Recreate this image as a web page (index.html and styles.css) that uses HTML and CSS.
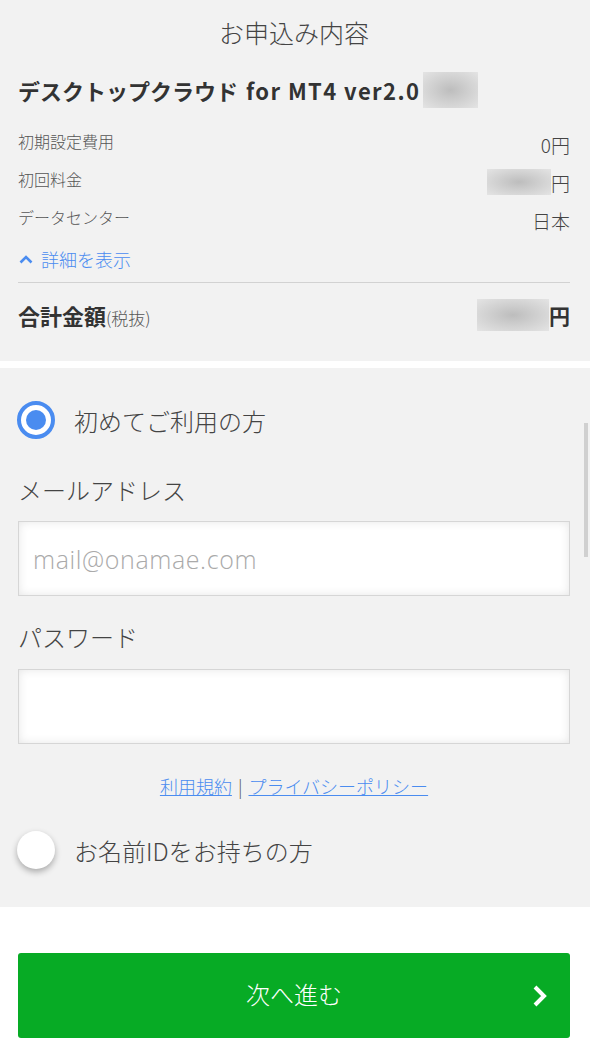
FILE: index.html
```html
<!DOCTYPE html>
<html lang="ja">
<head>
    <meta charset="UTF-8">
    <meta name="viewport" content="width=device-width, initial-scale=1.0">
    <title>お申込み内容</title>
    <link rel="stylesheet" href="styles.css">
</head>
<body>

<div class="summary">
    <h2 class="summary-title">お申込み内容</h2>
    <div class="product">デスクトップクラウド<span class="product-latin">for MT4 ver2.0</span><span class="blur blur-plan"></span></div>

    <div class="row row-first">
        <span class="row-label">初期設定費用</span>
        <span class="row-value">0円</span>
    </div>
    <div class="row">
        <span class="row-label">初回料金</span>
        <span class="row-value"><span class="blur blur-price"></span>円</span>
    </div>
    <div class="row">
        <span class="row-label">データセンター</span>
        <span class="row-value">日本</span>
    </div>

    <a class="toggle" href="#">
        <svg width="14" height="10" viewBox="0 0 14 10"><path d="M1.5 8.5 L7 3 L12.5 8.5" fill="none" stroke="#4a8cf0" stroke-width="2.6"/></svg>
        詳細を表示
    </a>

    <div class="total">
        <span class="total-label">合計金額<small>(税抜)</small></span>
        <span class="total-value"><span class="blur blur-total"></span>円</span>
    </div>
</div>

<div class="login">
    <label class="choice">
        <span class="radio radio-on"></span>
        初めてご利用の方
    </label>

    <div class="field-label">メールアドレス</div>
    <input class="field" type="text" placeholder="mail@onamae.com">

    <div class="field-label field-label-pw">パスワード</div>
    <input class="field field-pw" type="password">

    <div class="links">
        <a href="#">利用規約</a><span class="sep">|</span><a href="#">プライバシーポリシー</a>
    </div>

    <label class="choice choice-id">
        <span class="radio"></span>
        お名前IDをお持ちの方
    </label>

    <div class="scrollbar"></div>
</div>

<div class="actions">
    <button class="next">
        次へ進む
        <svg class="next-arrow" width="16" height="24" viewBox="0 0 16 24"><path d="M3 3 L12 12 L3 21" fill="none" stroke="#fff" stroke-width="4"/></svg>
    </button>
</div>

</body>
</html>
```

FILE: styles.css
```css
* {
    margin: 0;
    padding: 0;
    box-sizing: border-box;
}

body {
    font-family: "Noto Sans CJK JP", "Open Sans", sans-serif;
    font-weight: 300;
    background-color: #ffffff;
    color: #333;
    width: 590px;
}

/* お申込み内容 */
.summary {
    background-color: #f2f2f2;
    padding: 18px 20px 27px 18px;
    height: 361px;
    margin-bottom: 7px;
}

.summary-title {
    font-size: 25px;
    font-weight: 300;
    line-height: 32px;
    text-align: center;
    color: #444;
    margin-top: -2px;
    margin-bottom: 2px;
}

.product {
    margin-top: 24px;
    height: 36px;
    font-size: 22px;
    font-weight: bold;
    line-height: 36px;
    color: #333;
    display: flex;
    align-items: center;
}

.product-latin {
    margin-left: 8px;
    letter-spacing: 1.4px;
}

.blur {
    display: inline-block;
    background: radial-gradient(ellipse at center, #bdbdbd 0%, #cfcfcf 45%, #e4e4e4 100%);
}

.blur-plan {
    width: 55px;
    height: 36px;
    margin-left: 3px;
}

.row {
    display: flex;
    justify-content: space-between;
    align-items: center;
    height: 38px;
}

.row-first {
    margin-top: 16px;
}

.row-label {
    font-size: 16px;
    color: #555;
    margin-top: -4px;
}

.row-value {
    font-size: 19px;
    color: #444;
    display: flex;
    align-items: center;
    margin-top: 2px;
}

.blur-price {
    width: 64px;
    height: 26px;
}

.toggle {
    display: flex;
    align-items: center;
    gap: 8px;
    margin-top: 9px;
    height: 24px;
    font-size: 18px;
    color: #4a8cf0;
    text-decoration: none;
    padding-left: 1px;
}

.total {
    display: flex;
    justify-content: space-between;
    align-items: center;
    margin-top: 11px;
    border-top: 1px solid #d2d2d2;
    padding-top: 12px;
    height: 52px;
}

.total-label {
    font-size: 22px;
    font-weight: bold;
    color: #333;
}

.total-label small {
    font-size: 17px;
    font-weight: 300;
    color: #555;
}

.total-value {
    display: flex;
    align-items: center;
    font-size: 21px;
    font-weight: bold;
}

.blur-total {
    width: 72px;
    height: 32px;
}

/* ログイン */
.login {
    position: relative;
    background-color: #f2f2f2;
    padding: 31px 20px 36px 18px;
}

.choice {
    display: flex;
    align-items: center;
    gap: 19px;
    height: 42px;
    font-size: 24px;
    color: #444;
    cursor: pointer;
}

.radio {
    width: 38px;
    height: 38px;
    margin-left: -1px;
    border-radius: 50%;
    background-color: #fff;
    box-shadow: 0 3px 6px rgba(0, 0, 0, 0.3);
    flex-shrink: 0;
}

.radio-on {
    box-shadow: none;
    border: 4px solid #4a8cf0;
    display: flex;
    align-items: center;
    justify-content: center;
}

.radio-on::after {
    content: "";
    width: 20px;
    height: 20px;
    border-radius: 50%;
    background-color: #4a8cf0;
}

.field-label {
    margin-top: 33px;
    font-size: 24px;
    line-height: 32px;
    color: #444;
}

.field-label-pw {
    margin-top: 25px;
}

.field {
    display: block;
    width: 100%;
    height: 75px;
    margin-top: 15px;
    border: 1px solid #d6d6d6;
    background-color: #fff;
    box-shadow: inset 0 0 10px rgba(0, 0, 0, 0.1);
    padding: 0 14px;
    font-family: "Open Sans", "Noto Sans CJK JP", sans-serif;
    font-size: 25px;
    font-weight: 300;
    letter-spacing: 0.6px;
    color: #333;
    outline: none;
}

.field::placeholder {
    color: #aaa;
}

.field-pw {
    margin-top: 16px;
}

.links {
    margin-top: 30px;
    text-align: center;
    font-size: 18px;
    line-height: 24px;
    color: #555;
}

.links a {
    color: #4a8cf0;
}

.sep {
    margin: 0 6px;
}

.choice-id {
    margin-top: 31px;
}

.scrollbar {
    position: absolute;
    top: 55px;
    right: 2px;
    width: 4px;
    height: 134px;
    background-color: #d0d0d0;
}

/* 次へ進む */
.actions {
    padding: 46px 20px 0 18px;
}

.next {
    position: relative;
    width: 100%;
    height: 85px;
    padding-bottom: 5px;
    border: none;
    border-radius: 3px;
    background-color: #07ab25;
    color: #fff;
    font-family: "Noto Sans CJK JP", sans-serif;
    font-size: 24px;
    font-weight: 300;
    cursor: pointer;
}

.next-arrow {
    position: absolute;
    right: 22px;
    top: 31px;
}
```
